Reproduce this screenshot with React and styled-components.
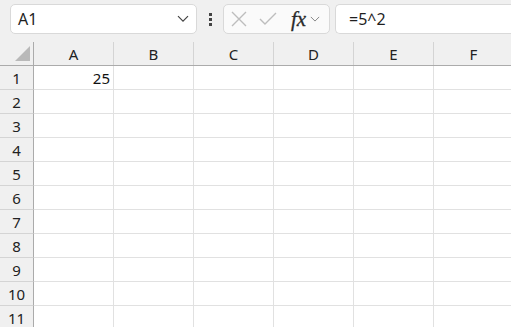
import React from 'react'
import styled, { createGlobalStyle } from 'styled-components';

const GlobalStyle = createGlobalStyle`
    html, body {
        margin: 0;
        padding: 0;
        background: #f0f0f0;
        overflow: hidden;
    }
    body {
        font-family: "Noto Sans", "Open Sans", sans-serif;
        color: #1f1f1f;
    }
`

const columns = ['A', 'B', 'C', 'D', 'E', 'F'];
const rows = Array.from({ length: 11 }, (_, i) => i + 1);
const values = { A1: '25' };

function Chevron({ size = 12, color = '#444' }) {
    return (
        <svg width={size} height={size * 0.6} viewBox="0 0 12 7">
            <path d="M1 1 L6 6 L11 1" fill="none" stroke={color} strokeWidth="1.2" />
        </svg>
    )
}

function App() {
    return (
        <Page>
            <GlobalStyle />
            <Toolbar>
                <NameBox>
                    <span>A1</span>
                    <Chevron />
                </NameBox>
                <Grip>
                    <Dot /><Dot /><Dot />
                </Grip>
                <FormulaButtons>
                    <svg width="16" height="16" viewBox="0 0 16 16">
                        <path d="M1 1 L15 15 M15 1 L1 15" stroke="#bdbdbd" strokeWidth="1.4" fill="none" />
                    </svg>
                    <svg width="18" height="14" viewBox="0 0 18 14">
                        <path d="M1 7 L6 12 L17 1" stroke="#bdbdbd" strokeWidth="1.4" fill="none" />
                    </svg>
                    <Fx>fx</Fx>
                    <Chevron size={10} color="#888" />
                </FormulaButtons>
                <FormulaInput>=5^2</FormulaInput>
            </Toolbar>
            <Sheet>
                <HeaderRow>
                    <Corner>
                        <Triangle />
                    </Corner>
                    {columns.map(c => <ColHeader key={c}>{c}</ColHeader>)}
                </HeaderRow>
                {rows.map(r => (
                    <Row key={r}>
                        <RowHeader>{r}</RowHeader>
                        {columns.map(c => (
                            <Cell key={c}>{values[`${c}${r}`]}</Cell>
                        ))}
                    </Row>
                ))}
            </Sheet>
        </Page>
    )
}

export default App;

const Page = styled.div`
    width: 511px;
    height: 327px;
    overflow: hidden;
    background: #f0f0f0;
`

const Toolbar = styled.div`
    height: 41px;
    box-sizing: border-box;
    padding: 4px 0 0 10px;
    display: flex;
    align-items: flex-start;
`

const Box = styled.div`
    height: 30px;
    box-sizing: border-box;
    border: 1px solid #d9d9d9;
    border-radius: 5px;
    background: #ffffff;
    display: flex;
    align-items: center;
`

const NameBox = styled(Box)`
    width: 187px;
    padding: 0 7px 0 7px;
    justify-content: space-between;
    font-size: 16px;
`

const Grip = styled.div`
    width: 26px;
    height: 30px;
    display: flex;
    flex-direction: column;
    align-items: center;
    justify-content: center;
    gap: 2px;
`

const Dot = styled.div`
    width: 3px;
    height: 3px;
    background: #444;
`

const FormulaButtons = styled(Box)`
    width: 107px;
    padding: 0 7px 0 7px;
    gap: 12px;
    background: #fafafa;
`

const Fx = styled.span`
    font-family: "Liberation Serif", "DejaVu Serif", serif;
    font-style: italic;
    font-size: 21px;
    color: #2a2a2a;
    margin-left: 2px;
    margin-right: -8px;
    line-height: 1;
    -webkit-text-stroke: 0.3px #2a2a2a;
`

const FormulaInput = styled(Box)`
    flex: 1;
    margin-left: 5px;
    padding-left: 13px;
    font-size: 16px;
    border-right: none;
    border-radius: 5px 0 0 5px;
`

const Sheet = styled.div`
    width: 520px;
`

const HeaderRow = styled.div`
    display: grid;
    grid-template-columns: 34px repeat(6, 80px);
    height: 25px;
    box-sizing: border-box;
    border-bottom: 1px solid #ababab;
`

const Corner = styled.div`
    position: relative;
    border-right: 1px solid #ababab;
    margin-top: 1px;
`

const Triangle = styled.div`
    position: absolute;
    right: 3px;
    bottom: 4px;
    width: 0;
    height: 0;
    border-left: 15px solid transparent;
    border-bottom: 15px solid #b9b9b9;
`

const ColHeader = styled.div`
    border-right: 1px solid #d4d4d4;
    margin-top: 1px;
    display: flex;
    align-items: center;
    justify-content: center;
    font-size: 15px;
    color: #222;
`

const Row = styled.div`
    display: grid;
    grid-template-columns: 34px repeat(6, 80px);
    height: 24px;
`

const RowHeader = styled.div`
    background: #f0f0f0;
    border-right: 1px solid #ababab;
    border-bottom: 1px solid #d4d4d4;
    display: flex;
    align-items: center;
    justify-content: center;
    font-size: 15px;
    color: #222;
`

const Cell = styled.div`
    background: #ffffff;
    border-right: 1px solid #e1e1e1;
    border-bottom: 1px solid #e1e1e1;
    display: flex;
    align-items: center;
    justify-content: flex-end;
    padding-right: 3px;
    font-size: 15px;
    color: #111;
`
